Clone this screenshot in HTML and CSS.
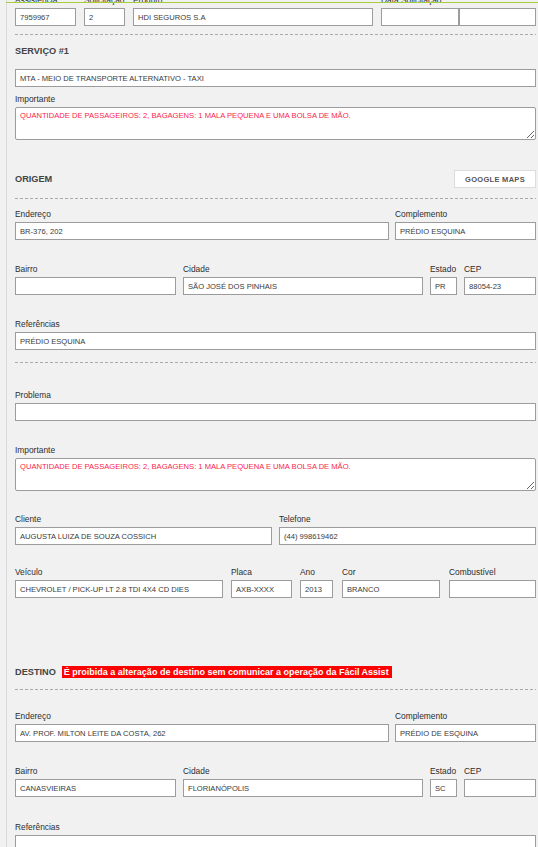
FILE: index.html
```html
<!DOCTYPE html>
<html lang="pt-BR">
<head>
<meta charset="utf-8">
<title>Atendimento</title>
<link rel="stylesheet" href="styles.css">
</head>
<body>
<div class="topbar"></div>
<div class="page">

  <div class="row">
    <div class="field w61"><div class="lbl">Assistência</div><div class="inp">7959967</div></div>
    <div class="field w41"><div class="lbl">Solicitação</div><div class="inp">2</div></div>
    <div class="field grow"><div class="lbl">Produto</div><div class="inp">HDI SEGUROS S.A</div></div>
    <div class="field w155">
      <div class="lbl">Data Solicitação</div>
      <div class="pair"><div class="inp w78"></div><div class="inp grow"></div></div>
    </div>
  </div>

  <div class="dash gap-a"></div>

  <div class="sec-title gap-a">SERVIÇO #1</div>
  <div class="inp gap-b">MTA - MEIO DE TRANSPORTE ALTERNATIVO - TAXI</div>

  <div class="field gap-c">
    <div class="lbl">Importante</div>
    <textarea class="ta" readonly>QUANTIDADE DE PASSAGEIROS: 2, BAGAGENS: 1 MALA PEQUENA E UMA BOLSA DE MÃO.</textarea>
  </div>

  <div class="sec-head gap-d">
    <div class="sec-title">ORIGEM</div>
    <div class="btn">GOOGLE MAPS</div>
  </div>
  <div class="dash gap-e"></div>

  <div class="row row-addr gap-f">
    <div class="field w374"><div class="lbl">Endereço</div><div class="inp">BR-376, 202</div></div>
    <div class="field grow"><div class="lbl">Complemento</div><div class="inp">PRÉDIO ESQUINA</div></div>
  </div>

  <div class="row row-city gap-g">
    <div class="field w161"><div class="lbl">Bairro</div><div class="inp"></div></div>
    <div class="field w240"><div class="lbl">Cidade</div><div class="inp">SÃO JOSÉ DOS PINHAIS</div></div>
    <div class="field w27"><div class="lbl">Estado</div><div class="inp">PR</div></div>
    <div class="field grow"><div class="lbl">CEP</div><div class="inp">88054-23</div></div>
  </div>

  <div class="field gap-g">
    <div class="lbl">Referências</div><div class="inp">PRÉDIO ESQUINA</div>
  </div>

  <div class="dash gap-h"></div>

  <div class="field gap-i">
    <div class="lbl">Problema</div><div class="inp"></div>
  </div>

  <div class="field gap-g">
    <div class="lbl">Importante</div>
    <textarea class="ta" readonly>QUANTIDADE DE PASSAGEIROS: 2, BAGAGENS: 1 MALA PEQUENA E UMA BOLSA DE MÃO.</textarea>
  </div>

  <div class="row row-client gap-j">
    <div class="field grow"><div class="lbl">Cliente</div><div class="inp">AUGUSTA LUIZA DE SOUZA COSSICH</div></div>
    <div class="field grow"><div class="lbl">Telefone</div><div class="inp">(44) 998619462</div></div>
  </div>

  <div class="row row-car gap-k">
    <div class="field w208"><div class="lbl">Veículo</div><div class="inp">CHEVROLET / PICK-UP LT 2.8 TDI 4X4 CD DIES</div></div>
    <div class="field w61"><div class="lbl">Placa</div><div class="inp">AXB-XXXX</div></div>
    <div class="field w33"><div class="lbl">Ano</div><div class="inp">2013</div></div>
    <div class="field w99 push1"><div class="lbl">Cor</div><div class="inp">BRANCO</div></div>
    <div class="field grow push1"><div class="lbl">Combustível</div><div class="inp"></div></div>
  </div>

  <div class="sec-head gap-l">
    <div class="sec-left">
      <div class="sec-title">DESTINO</div>
      <div class="alert">É proibida a alteração de destino sem comunicar a operação da Fácil Assist</div>
    </div>
  </div>
  <div class="dash gap-a"></div>

  <div class="row row-addr gap-m">
    <div class="field w374"><div class="lbl">Endereço</div><div class="inp">AV. PROF. MILTON LEITE DA COSTA, 262</div></div>
    <div class="field grow"><div class="lbl">Complemento</div><div class="inp">PRÉDIO DE ESQUINA</div></div>
  </div>

  <div class="row row-city gap-g">
    <div class="field w161"><div class="lbl">Bairro</div><div class="inp">CANASVIEIRAS</div></div>
    <div class="field w240"><div class="lbl">Cidade</div><div class="inp">FLORIANÓPOLIS</div></div>
    <div class="field w27"><div class="lbl">Estado</div><div class="inp">SC</div></div>
    <div class="field grow"><div class="lbl">CEP</div><div class="inp"></div></div>
  </div>

  <div class="field gap-n">
    <div class="lbl">Referências</div><div class="inp"></div>
  </div>

</div>
</body>
</html>
```

FILE: styles.css
```css
html, body {
  margin: 0;
  padding: 0;
  background: #f1f1f1;
}

body {
  font-family: "Liberation Sans", Arial, sans-serif;
  overflow: hidden;
}

.topbar {
  position: fixed;
  top: 2px;
  left: 6px;
  right: 0;
  height: 1px;
  background: #a6cd3a;
  z-index: 5;
}

.page {
  margin-top: -6px;
  margin-left: 6px;
  border-left: 1px solid #dadada;
  padding: 0 2px 40px 8px;
}

.row {
  display: flex;
  gap: 8px;
}

.row-addr { gap: 6px; }
.row-city, .row-client { gap: 7px; }
.row-car { gap: 8px; }
.push1 { margin-left: 1px; }

.field {
  display: flex;
  flex-direction: column;
  min-width: 0;
}

.grow { flex: 1 1 0; min-width: 0; }
.w27 { width: 27px; flex: none; }
.w33 { width: 33px; flex: none; }
.w41 { width: 41px; flex: none; }
.w61 { width: 61px; flex: none; }
.w78 { width: 78px; flex: none; }
.w99 { width: 98px; flex: none; }
.w155 { width: 155px; flex: none; }
.w161 { width: 161px; flex: none; }
.w208 { width: 208px; flex: none; }
.w240 { width: 240px; flex: none; }
.w374 { width: 374px; flex: none; }

.lbl {
  height: 13px;
  line-height: 13px;
  font-size: 8.4px;
  color: #2e2e2e;
  white-space: nowrap;
}

.pair {
  display: flex;
}

.inp {
  box-sizing: border-box;
  height: 18px;
  margin-top: 1px;
  border: 1px solid #9c9c9c;
  background: #fff;
  padding: 0 4px;
  font-size: 7.6px;
  color: #3a3a3a;
  display: flex;
  align-items: center;
  white-space: nowrap;
  overflow: hidden;
}

.ta {
  box-sizing: border-box;
  display: block;
  width: 100%;
  height: 33px;
  margin: 1px 0 0 0;
  border: 1px solid #9c9c9c;
  border-radius: 2px;
  background: #fff;
  padding: 3px 4px;
  font-family: "Liberation Sans", Arial, sans-serif;
  font-size: 7.6px;
  line-height: 10px;
  color: #fb1e4b;
  resize: vertical;
  outline: none;
  overflow: hidden;
}

.dash {
  height: 1px;
  background: repeating-linear-gradient(to right, #a9a9a9 0 3px, transparent 3px 5px);
}

.sec-title {
  font-size: 9.2px;
  font-weight: bold;
  color: #444;
  line-height: 17px;
  height: 17px;
  white-space: nowrap;
}

.sec-head {
  display: flex;
  align-items: center;
  justify-content: space-between;
  height: 18px;
}

.sec-left {
  display: flex;
  align-items: center;
  gap: 6px;
}

.btn {
  box-sizing: border-box;
  width: 82px;
  height: 18px;
  border: 1px solid #dcdcdc;
  background: #fff;
  color: #555;
  font-size: 7.5px;
  font-weight: bold;
  letter-spacing: 0.3px;
  display: flex;
  align-items: center;
  justify-content: center;
}

.alert {
  background: #ff0000;
  color: #fff;
  font-size: 9px;
  font-weight: bold;
  line-height: 12px;
  height: 12px;
  padding: 0 3px 0 2px;
  white-space: nowrap;
}

/* vertical rhythm */
.gap-a { margin-top: 8px; }
.gap-b { margin-top: 9px; }
.gap-c { margin-top: 6px; }
.gap-d { margin-top: 30px; }
.gap-e { margin-top: 10px; }
.gap-f { margin-top: 9px; }
.gap-g { margin-top: 23px; }
.gap-h { margin-top: 12px; }
.gap-i { margin-top: 26px; }
.gap-j { margin-top: 22px; }
.gap-k { margin-top: 21px; }
.gap-l { margin-top: 65px; }
.gap-m { margin-top: 20px; }
.gap-n { margin-top: 24px; }
```
